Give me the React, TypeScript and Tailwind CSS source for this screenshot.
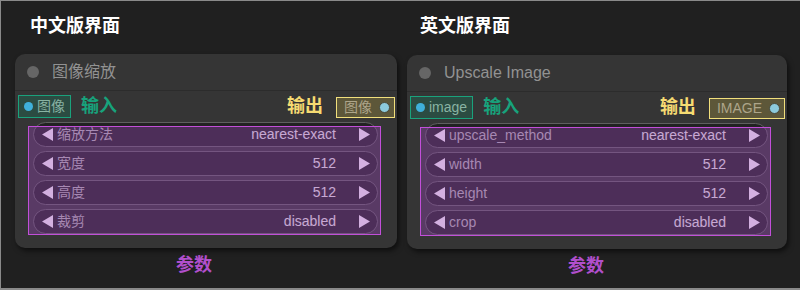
import React from "react";

type Widget = { label: string; value: string };

type NodeProps = {
  title: string;
  inLabel: string;
  outLabel: string;
  widgets: Widget[];
  width: string;
};

const font = { fontFamily: '"Liberation Sans", "Noto Sans CJK SC", sans-serif' };

const Arrow: React.FC<{ dir: "left" | "right" }> = ({ dir }) => (
  <svg width="11" height="13" viewBox="0 0 11 13" className="shrink-0">
    <polygon points={dir === "left" ? "11,0 11,13 0,6.5" : "0,0 0,13 11,6.5"} fill="#f6f0f8" />
  </svg>
);

const WidgetRow: React.FC<{ w: Widget }> = ({ w }) => (
  <div className="h-[25px] rounded-full border border-[#5f5f5f] bg-[#222] flex items-center pl-[8px] pr-[7px] text-[14px]">
    <Arrow dir="left" />
    <span className="ml-[4px] text-[#b0b0b0]">{w.label}</span>
    <span className="ml-auto text-[#e2e2e2]">{w.value}</span>
    <span className="ml-[23px] flex">
      <Arrow dir="right" />
    </span>
  </div>
);

const GraphNode: React.FC<NodeProps> = ({ title, inLabel, outLabel, widgets, width }) => (
  <div className={`relative ${width} rounded-[10px] bg-[#353535] shadow-[2px_3px_5px_rgba(0,0,0,0.55)]`}>
    <div className="h-[37px] flex items-center pl-[12px] border-b border-[#2c2c2c]">
      <span className="w-[12px] h-[12px] rounded-full bg-[#666]" />
      <span className="ml-[13px] text-[16px] text-[#929292]">{title}</span>
    </div>
    <div className="h-[27px] flex items-end pl-[3px] pr-[2px]">
      <div className="h-[23px] flex items-center pl-[5px] pr-[5px] border border-[#1aa27c] bg-[#2b4c42]">
        <span className="w-[9px] h-[9px] rounded-full bg-[#3fb0db]" />
        <span className="ml-[4px] text-[14px] text-[#89b3a3]">{inLabel}</span>
      </div>
      <span className="self-center mt-[3px] ml-[10px] text-[18px] font-bold text-[#17a37c]">输入</span>
      <span className="self-center mt-[3px] ml-auto text-[18px] font-bold text-[#f6db72]">输出</span>
      <div className="ml-[13px] h-[21px] flex items-center pl-[7px] pr-[4px] border border-[#f1df7c] bg-[#5d5739]">
        <span className="text-[14px] text-[#ada58a]">{outLabel}</span>
        <span className="ml-[7px] w-[11px] h-[11px] rounded-full bg-[#8ccadb] border border-[#4a4a3a]" />
      </div>
    </div>
    <div className="flex flex-col gap-[4px] pt-[4px] pl-[18px] pr-[19px] pb-[14px]">
      {widgets.map((w) => (
        <WidgetRow key={w.label} w={w} />
      ))}
    </div>
    <div className="absolute left-[13px] right-[16px] top-[72px] h-[109px] border border-[#c24fd9] bg-[rgba(153,69,185,0.37)]" />
  </div>
);

const Column: React.FC<{ heading: string; headPad: string; children: React.ReactNode }> = ({
  heading,
  headPad,
  children,
}) => (
  <div className="flex flex-col">
    <div className={`h-[53px] pt-[12px] ${headPad} text-[18px] font-bold text-white leading-[26px]`}>{heading}</div>
    {children}
    <div className="pl-[161px] mt-[4px] text-[18px] font-bold text-[#b14fcc] leading-[26px]">参数</div>
  </div>
);

export default function App() {
  return (
    <div
      className="w-[800px] h-[290px] bg-[#202020] border-l border-t border-b-2 border-[#8a8a8a] flex gap-[10px] pl-[14px] overflow-hidden"
      style={font}
    >
      <Column heading="中文版界面" headPad="pl-[15px]">
        <GraphNode
          title="图像缩放"
          inLabel="图像"
          outLabel="图像"
          width="w-[382px]"
          widgets={[
            { label: "缩放方法", value: "nearest-exact" },
            { label: "宽度", value: "512" },
            { label: "高度", value: "512" },
            { label: "裁剪", value: "disabled" },
          ]}
        />
      </Column>
      <Column heading="英文版界面" headPad="pl-[13px]">
        <div className="mt-[1px]">
          <GraphNode
            title="Upscale Image"
            inLabel="image"
            outLabel="IMAGE"
            width="w-[380px]"
            widgets={[
              { label: "upscale_method", value: "nearest-exact" },
              { label: "width", value: "512" },
              { label: "height", value: "512" },
              { label: "crop", value: "disabled" },
            ]}
          />
        </div>
      </Column>
    </div>
  );
}
